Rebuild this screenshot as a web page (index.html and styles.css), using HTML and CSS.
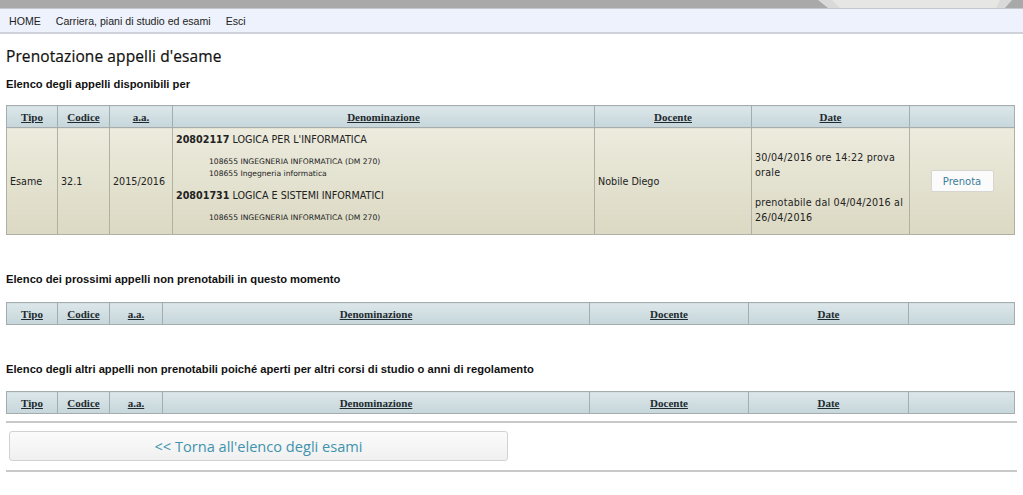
FILE: index.html
```html
<!DOCTYPE html>
<html lang="it">
<head>
<meta charset="utf-8">
<title>Prenotazione appelli d'esame</title>
<link rel="stylesheet" href="styles.css">
</head>
<body>
<div class="banner">
  <svg class="banner-art" width="1023" height="8" viewBox="0 0 1023 8" preserveAspectRatio="none">
    <polygon points="818,0 1012,0 1005,8 828,8" fill="#d9d9d9"/>
    <polygon points="832,0 1000,0 996,8 840,8" fill="#e6e6e4"/>
  </svg>
</div>
<nav class="nav">
  <a class="nav-item">HOME</a>
  <a class="nav-item">Carriera, piani di studio ed esami</a>
  <a class="nav-item">Esci</a>
</nav>
<main class="content">
  <h1 class="title">Prenotazione appelli d'esame</h1>
  <h2 class="section">Elenco degli appelli disponibili per</h2>
  <table class="grid grid-a">
    <colgroup>
      <col class="ca1"><col class="ca2"><col class="ca3"><col class="ca4"><col class="ca5"><col class="ca6"><col class="ca7">
    </colgroup>
    <thead>
      <tr><th><u>Tipo</u></th><th><u>Codice</u></th><th><u>a.a.</u></th><th><u>Denominazione</u></th><th><u>Docente</u></th><th><u>Date</u></th><th></th></tr>
    </thead>
    <tbody>
      <tr>
        <td>Esame</td>
        <td>32.1</td>
        <td>2015/2016</td>
        <td class="denom">
          <div class="course"><b>20802117</b> LOGICA PER L'INFORMATICA</div>
          <div class="cds">108655 INGEGNERIA INFORMATICA (DM 270)</div>
          <div class="cds">108655 Ingegneria informatica</div>
          <div class="course second"><b>20801731</b> LOGICA E SISTEMI INFORMATICI</div>
          <div class="cds">108655 INGEGNERIA INFORMATICA (DM 270)</div>
        </td>
        <td>Nobile Diego</td>
        <td class="dates">
          <p>30/04/2016 ore 14:22 prova orale</p>
          <p>prenotabile dal 04/04/2016 al 26/04/2016</p>
        </td>
        <td class="act"><button class="btn-book">Prenota</button></td>
      </tr>
    </tbody>
  </table>

  <h2 class="section section-gap">Elenco dei prossimi appelli non prenotabili in questo momento</h2>
  <table class="grid grid-b">
    <colgroup>
      <col class="cb1"><col class="cb2"><col class="cb3"><col class="cb4"><col class="cb5"><col class="cb6"><col class="cb7">
    </colgroup>
    <thead>
      <tr><th><u>Tipo</u></th><th><u>Codice</u></th><th><u>a.a.</u></th><th><u>Denominazione</u></th><th><u>Docente</u></th><th><u>Date</u></th><th></th></tr>
    </thead>
  </table>

  <h2 class="section section-gap">Elenco degli altri appelli non prenotabili poiché aperti per altri corsi di studio o anni di regolamento</h2>
  <table class="grid grid-b grid-last">
    <colgroup>
      <col class="cb1"><col class="cb2"><col class="cb3"><col class="cb4"><col class="cb5"><col class="cb6"><col class="cb7">
    </colgroup>
    <thead>
      <tr><th><u>Tipo</u></th><th><u>Codice</u></th><th><u>a.a.</u></th><th><u>Denominazione</u></th><th><u>Docente</u></th><th><u>Date</u></th><th></th></tr>
    </thead>
  </table>

  <div class="footer-bar">
    <a class="back-btn">&lt;&lt; Torna all'elenco degli esami</a>
  </div>
</main>
</body>
</html>
```
FILE: styles.css
```css
html, body {
  margin: 0;
  padding: 0;
  background: #ffffff;
}
body {
  font-family: "Liberation Sans", Arial, sans-serif;
  color: #111;
  width: 1023px;
}
.banner {
  height: 8px;
  background: #a9a9a9;
  overflow: hidden;
}
.banner-art {
  display: block;
}
.nav {
  height: 23px;
  background: #eef2fc;
  border-top: 1px solid #c4c8cc;
  border-bottom: 2px solid #d0d2da;
  display: flex;
  align-items: center;
  padding-left: 9px;
  box-sizing: content-box;
}
.nav-item {
  font-size: 10.6px;
  color: #222;
  margin-right: 15px;
  padding-top: 1px;
}
.content {
  padding: 0 9px 0 6px;
}
.title {
  font-family: "Open Sans", "DejaVu Sans", sans-serif;
  font-weight: normal;
  font-size: 15.5px;
  margin: 12px 0 0 0;
  line-height: 20px;
  color: #111;
  letter-spacing: 0.1px;
  -webkit-text-stroke: 0.2px #111;
}
.section {
  font-size: 11.2px;
  font-weight: bold;
  margin: 11px 0 0 0;
  line-height: 14px;
  color: #111;
}
.section-gap { margin-top: 37px; }

.grid {
  width: 1008px;
  table-layout: fixed;
  border-collapse: collapse;
  margin-top: 14px;
  border: 1px solid #9aa0a0;
}
.grid-b { margin-top: 16px; }
.grid-last { margin-top: 15px; }
.grid-last th { height: 22px; }
.ca1 { width: 51px; } .ca2 { width: 52px; } .ca3 { width: 63px; } .ca4 { width: 422px; }
.ca5 { width: 157px; } .ca6 { width: 158px; } .ca7 { width: 105px; }
.cb1 { width: 51px; } .cb2 { width: 52px; } .cb3 { width: 53px; } .cb4 { width: 427px; }
.cb5 { width: 159px; } .cb6 { width: 160px; } .cb7 { width: 106px; }

.grid th {
  height: 21px;
  padding: 0;
  background: linear-gradient(#dbe6ea, #c6d6da);
  border: 1px solid #a4acae;
  font-family: "Liberation Serif", "Times New Roman", serif;
  font-size: 11px;
  font-weight: bold;
  color: #1e2a2e;
  text-align: center;
  vertical-align: middle;
}
.grid th u {
  text-decoration-thickness: 1px;
  text-underline-offset: 1px;
}
.grid td {
  background: linear-gradient(#ecebdd, #dbd9c3);
  border: 1px solid #b0b0a4;
  font-family: "DejaVu Sans", Verdana, sans-serif;
  font-size: 9.6px;
  color: #222;
  padding: 0 3px;
  vertical-align: middle;
}
.denom {
  padding: 6px 3px 10px 3px !important;
}
.course {
  font-size: 9.6px;
  line-height: 12px;
}
.course b { font-weight: bold; }
.course.second { margin-top: 10px; }
.cds {
  font-size: 7.6px;
  line-height: 12px;
  padding-left: 33px;
}
.course + .cds { margin-top: 10px; }
.grid td.dates {
  padding-top: 12px;
  letter-spacing: 0.2px;
}
.dates p {
  margin: 0;
  line-height: 15px;
}
.dates p + p { margin-top: 15px; }
.act { text-align: center; }
.btn-book {
  font-family: "DejaVu Sans", Verdana, sans-serif;
  font-size: 10px;
  color: #3d7d9b;
  background: #fbfbfb;
  border: 1px solid #d6d6d0;
  border-radius: 2px;
  width: 63px;
  height: 22px;
  padding: 0;
}
.footer-bar {
  margin-top: 7px;
  border-top: 2px solid #c8c8c8;
  border-bottom: 2px solid #c8c8c8;
  padding: 8px 0 9px 3px;
  width: 1008px;
}
.back-btn {
  display: flex;
  align-items: center;
  justify-content: center;
  width: 499px;
  height: 30px;
  box-sizing: border-box;
  border: 1px solid #d2d2d2;
  border-radius: 3px;
  background: linear-gradient(#fbfbfb, #f0f0f0);
  font-family: "Open Sans", "DejaVu Sans", sans-serif;
  font-size: 14.6px;
  color: #3f93ad;
}
```
